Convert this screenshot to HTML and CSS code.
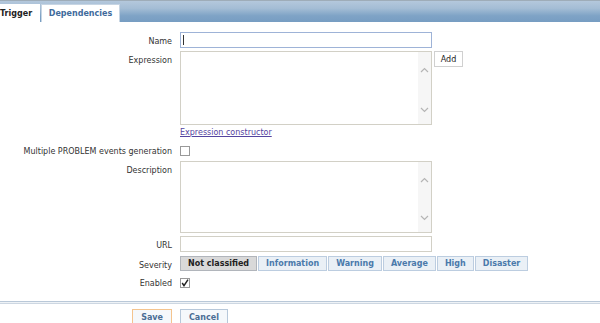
FILE: index.html
```html
<!DOCTYPE html>
<html lang="en">
<head>
  <meta charset="UTF-8" />
  <title>Trigger</title>
  <link rel="stylesheet" href="styles.css">
</head>
<body>
  <div class="tabs">
    <span class="tab active">Trigger</span>
    <span class="tab">Dependencies</span>
  </div>

  <div class="form">
    <label class="lbl row-name">Name</label>
    <div class="field row-name">
      <div class="input-wrap">
        <input type="text" class="text focused" id="name" />
        <span class="caret"></span>
      </div>
    </div>

    <label class="lbl row-expr">Expression</label>
    <div class="field row-expr with-btn">
      <div class="area">
        <textarea></textarea>
        <div class="scroll">
          <svg width="9" height="6" viewBox="0 0 9 6"><path d="M1 5 L4.5 1.5 L8 5" fill="none" stroke="#b5b5b5" stroke-width="1.2"/></svg>
          <svg width="9" height="6" viewBox="0 0 9 6"><path d="M1 1 L4.5 4.5 L8 1" fill="none" stroke="#b5b5b5" stroke-width="1.2"/></svg>
        </div>
      </div>
      <button class="btn-add">Add</button>
    </div>

    <span class="lbl"></span>
    <div class="field row-link"><a href="#">Expression constructor</a></div>

    <label class="lbl row-check">Multiple PROBLEM events generation</label>
    <div class="field row-check"><span class="check"></span></div>

    <label class="lbl row-desc">Description</label>
    <div class="field row-desc">
      <div class="area desc">
        <textarea></textarea>
        <div class="scroll">
          <svg width="9" height="6" viewBox="0 0 9 6"><path d="M1 5 L4.5 1.5 L8 5" fill="none" stroke="#b5b5b5" stroke-width="1.2"/></svg>
          <svg width="9" height="6" viewBox="0 0 9 6"><path d="M1 1 L4.5 4.5 L8 1" fill="none" stroke="#b5b5b5" stroke-width="1.2"/></svg>
        </div>
      </div>
    </div>

    <label class="lbl row-url">URL</label>
    <div class="field row-url"><input type="text" class="text" /></div>

    <label class="lbl row-sev">Severity</label>
    <div class="field row-sev severity">
      <span class="sev selected">Not classified</span>
      <span class="sev">Information</span>
      <span class="sev">Warning</span>
      <span class="sev">Average</span>
      <span class="sev">High</span>
      <span class="sev">Disaster</span>
    </div>

    <label class="lbl row-enabled">Enabled</label>
    <div class="field row-enabled">
      <span class="check checked">
        <svg width="8" height="8" viewBox="0 0 8 8"><path d="M1.2 4 L3 6.6 L7 0.6" fill="none" stroke="#222" stroke-width="1.5"/></svg>
      </span>
    </div>
  </div>

  <div class="separator"></div>

  <div class="footer">
    <div class="footer-left"><button class="btn save">Save</button></div>
    <div><button class="btn">Cancel</button></div>
  </div>
</body>
</html>
```
FILE: styles.css
```css
body {
  margin: 0;
  background: #fff;
  font-family: "DejaVu Sans", Verdana, sans-serif;
  font-size: 8px;
  color: #222;
}
.tabs {
  height: 22px;
  box-sizing: border-box;
  padding-top: 3px;
  display: flex;
  gap: 1px;
  border-top: 1px solid #9eacb8;
  background: linear-gradient(#b4c8dc, #a4bdd5 35%, #7fa3c6 70%, #779dc2);
}
.tab {
  display: flex;
  align-items: center;
  justify-content: center;
  background: #fff;
  font-weight: bold;
  color: #3f6b9c;
  border: 1px solid #c7d5e3;
  border-bottom: none;
  width: 77px;
}
.tab.active {
  width: 40px;
  color: #222;
  border: none;
  justify-content: flex-start;
}
.form {
  display: grid;
  grid-template-columns: 172px 1fr;
  column-gap: 8px;
  padding-top: 10px;
}
.lbl {
  text-align: right;
  line-height: 16px;
  padding-top: 2px;
  margin-bottom: -2px;
  color: #333;
}
.field {
  display: flex;
  align-items: flex-start;
}
.input-wrap {
  position: relative;
}
.caret {
  position: absolute;
  left: 3px;
  top: 3px;
  width: 1px;
  height: 10px;
  background: #333;
}
.text {
  display: block;
  width: 252px;
  height: 16px;
  box-sizing: border-box;
  border: 1px solid #d2d0c6;
  padding: 0 2px;
  font: inherit;
  outline: none;
  caret-color: transparent;
}
.text.focused {
  border-color: #9eb3d7;
}
.area {
  width: 252px;
  height: 74px;
  box-sizing: border-box;
  border: 1px solid #d2d0c6;
  display: flex;
}
.area.desc {
  height: 72px;
}
.area textarea {
  flex: 1;
  border: none;
  resize: none;
  outline: none;
  font: inherit;
}
.scroll {
  width: 13px;
  background: #f6f6f6;
  display: flex;
  flex-direction: column;
  justify-content: space-between;
  align-items: center;
  padding: 15px 0 11px;
}
.row-expr {
  margin-top: 3px;
}
.with-btn {
  gap: 2px;
}
.btn-add {
  height: 16px;
  width: 29px;
  padding: 0;
  border: 1px solid #d0d0d0;
  background: #fff;
  font: inherit;
  color: #222;
}
.row-link {
  height: 13px;
  margin-top: 1px;
}
.row-link a {
  color: #54449f;
  line-height: 13px;
}
.row-check {
  margin-top: 3px;
}
.check {
  display: inline-block;
  width: 8px;
  height: 8px;
  border: 1px solid #999;
  margin-top: 4px;
  background: #fff;
}
.check svg {
  display: block;
}
.row-desc {
  margin-top: 3px;
}
.row-url {
  margin-top: 3px;
}
.row-sev {
  margin-top: 4px;
}
.severity {
  gap: 1px;
}
.sev {
  height: 15px;
  box-sizing: border-box;
  padding: 0 7px;
  line-height: 13px;
  border: 1px solid #bccde0;
  background: #eaf0f6;
  color: #4a7aab;
  font-weight: bold;
}
.sev.selected {
  background: #d9d9d9;
  border-color: #b1b5bb;
  color: #222;
}
.row-enabled {
  margin-top: 2px;
}
.separator {
  margin-top: 11px;
  height: 1px;
  border-top: 1px solid #b9c8d8;
  border-bottom: 1px solid #cdd7e2;
  background: #eef2f6;
}
.footer {
  display: grid;
  grid-template-columns: 172px 1fr;
  column-gap: 8px;
  margin-top: 5px;
}
.footer-left {
  text-align: right;
}
.btn {
  height: 17px;
  padding: 0 8px;
  border: 1px solid #b7c8da;
  background: #f5f8fb;
  color: #4a6d94;
  font: inherit;
  font-weight: bold;
}
.btn.save {
  border-color: #f4c48e;
}
```
